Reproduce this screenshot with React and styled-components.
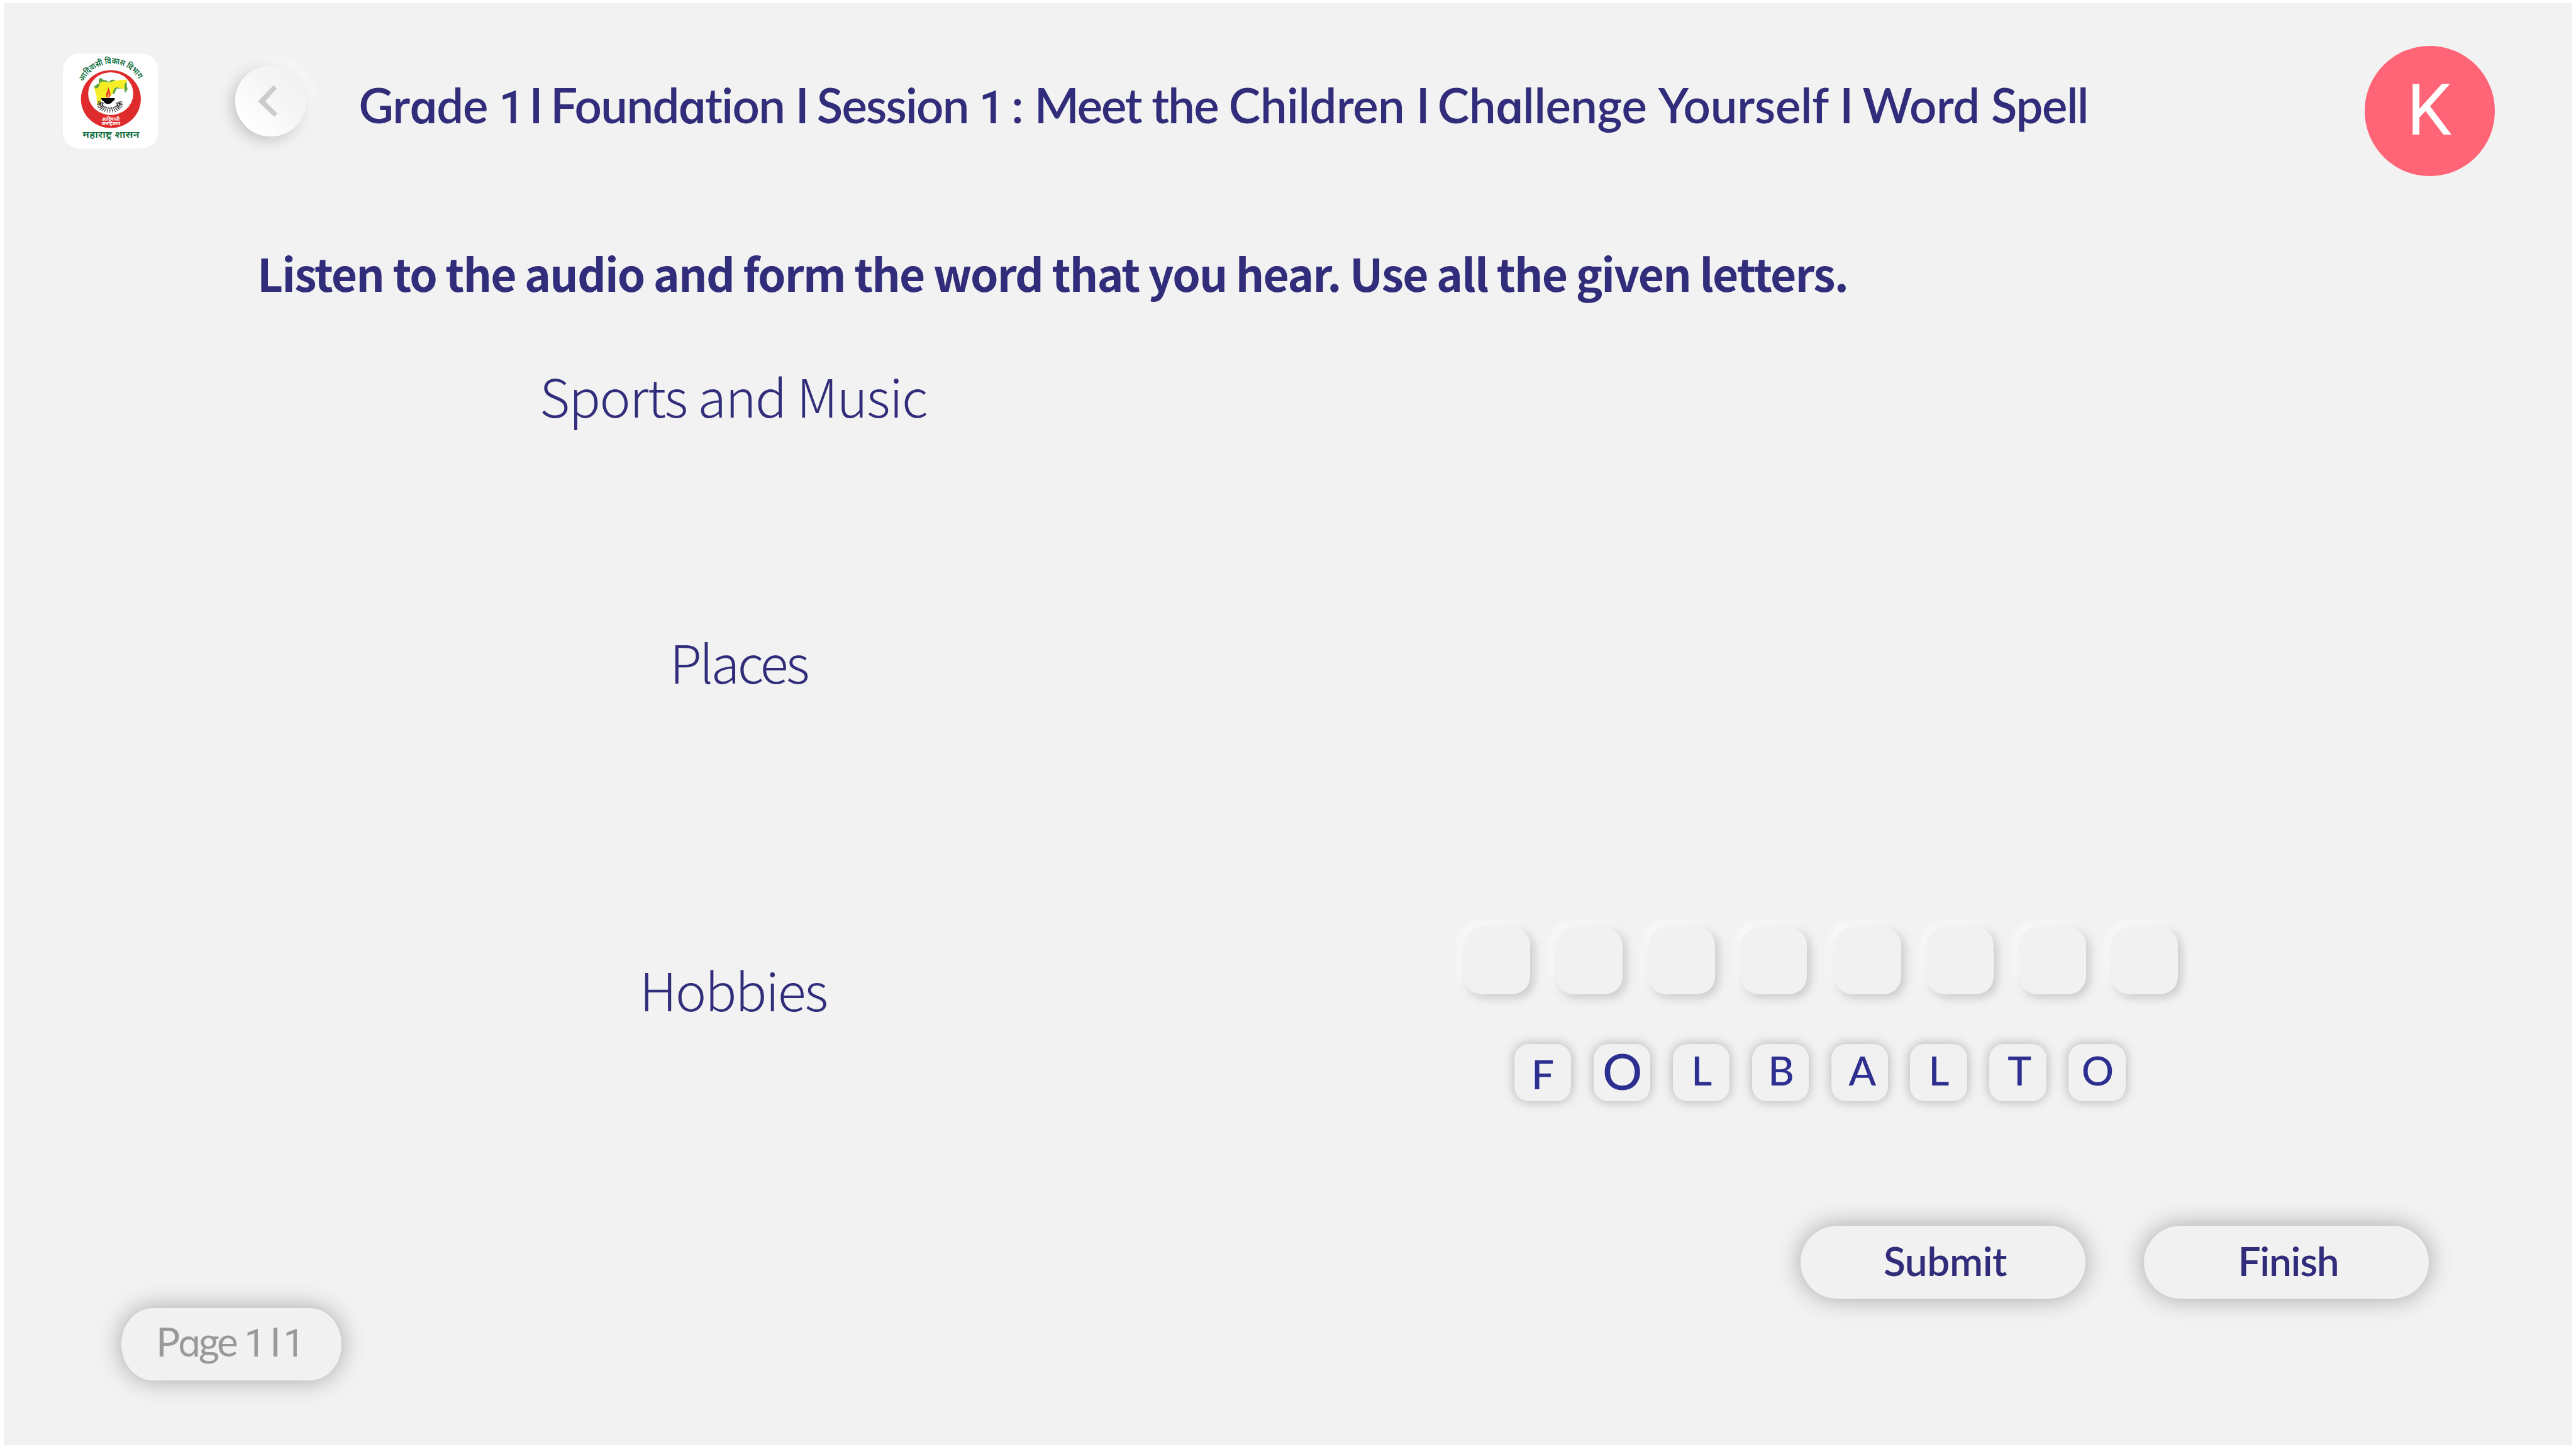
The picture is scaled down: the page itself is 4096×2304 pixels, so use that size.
import React, { useLayoutEffect, useRef, useState } from 'react';
import styled, { createGlobalStyle } from 'styled-components';

const Global = createGlobalStyle`
  html, body { margin: 0; padding: 0; background: #fff; }
  * { box-sizing: border-box; }
`;

const INK = '#312d7a';
const GEO = "Lato, 'Liberation Sans', sans-serif";
const HUMAN = "'Noto Sans CJK SC', 'Open Sans', sans-serif";

const Page = styled.div`
  width: 4096px;
  height: 2304px;
  overflow: hidden;
  display: flex;
  flex-direction: column;
  border: 6px solid #fff;
  border-top-width: 5px;
  background: #f2f2f2;
  color: ${INK};
  font-family: ${GEO};
  font-variant-ligatures: none;
`;

const Header = styled.header`
  display: flex;
  align-items: flex-start;
  height: 378px;
  padding: 68px 123.3px 0 93.5px;
`;

const LogoCard = styled.div`
  width: 151px;
  height: 151px;
  margin-top: 12px;
  border-radius: 26px;
  background: #fff;
  flex: none;
  svg { display: block; width: 100%; height: 100%; }
`;

const BackButton = styled.button`
  width: 113px;
  height: 113px;
  margin: 31px 0 0 123px;
  padding: 0;
  border: 0;
  border-radius: 50%;
  flex: none;
  background: linear-gradient(45deg, #fff 15%, #f5f5f5 60%, #f2f2f2 85%);
  box-shadow: -6px 6px 22px rgba(0, 0, 0, 0.19), 9px -8px 20px rgba(255, 255, 255, 0.75);
  svg { display: block; width: 100%; height: 100%; }
`;

const Title = styled.h1`
  margin: 47.5px 0 0 84px;
  font-size: 76px;
  line-height: 92px;
  font-weight: 600;
  white-space: pre;
`;

const Avatar = styled.div`
  width: 206.5px;
  height: 206.5px;
  margin-left: auto;
  flex: none;
  border-radius: 50%;
  background: #ff6577;
  color: #fff;
  display: flex;
  align-items: center;
  justify-content: center;
  font-family: Roboto, sans-serif;
  font-size: 113px;
  line-height: 200px;
  padding: 0 2px 0 0;
`;

const Prompt = styled.h2`
  margin: 0;
  padding-left: 403px;
  height: 158px;
  font-family: ${HUMAN};
  font-size: 71.2px;
  line-height: 100px;
  font-weight: 700;
  white-space: pre;
`;

const Main = styled.main`
  display: flex;
  height: 1150px;
`;

const Categories = styled.ul`
  list-style: none;
  margin: 0;
  padding: 27px 0 0;
  width: 2321.5px;
  flex: none;
`;

const Category = styled.li`
  height: ${(p) => p.$h}px;
  padding-left: ${(p) => p.$x}px;
  font-family: ${HUMAN};
  font-size: 83px;
  line-height: 120px;
  font-weight: 300;
  white-space: pre;
`;

const Puzzle = styled.section`
  padding-top: 934.3px;
`;

const SlotRow = styled.div`
  display: flex;
  gap: 44px;
`;

const SlotGroup = styled.div`
  display: flex;
  gap: 41.2px;
`;

const Slot = styled.div`
  width: 105.6px;
  height: 105.6px;
  border-radius: 28px;
  background: #f1f1f1;
  box-shadow: 5px 5px 16px rgba(0, 0, 0, 0.19), -5px -5px 16px #fff;
`;

const TileRow = styled.div`
  display: flex;
  gap: 35.5px;
  margin: 79.6px 0 0 80.5px;
`;

const Tile = styled.button`
  display: flex;
  align-items: flex-start;
  width: 90.4px;
  height: 91px;
  padding: ${(p) => p.$top}px 0 0 ${(p) => p.$left}px;
  border: 0;
  border-radius: 23px;
  background: #f1f1f1;
  box-shadow: 0 0 18px rgba(0, 0, 0, 0.28);
  color: #2c2f90;
  font-family: ${GEO};
  font-size: ${(p) => p.$size}px;
  line-height: 64px;
  font-weight: 500;
`;

const Actions = styled.div`
  display: flex;
  gap: 92.5px;
  justify-content: flex-end;
  padding: 258px 228.5px 0 0;
`;

const Pill = styled.button`
  display: flex;
  width: 453px;
  height: 116px;
  padding: 0 0 0 ${(p) => p.$inset}px;
  border: 0;
  border-radius: 58px;
  background: #f1f1f1;
  box-shadow: 0 0 38px rgba(0, 0, 0, 0.32);
  color: ${INK};
  font-family: ${GEO};
  font-size: 64px;
  line-height: 111px;
  font-weight: 600;
  white-space: pre;
`;

const Footer = styled.footer`
  padding: 15px 0 0 187px;
`;

const Pager = styled.div`
  width: 349.5px;
  height: 115px;
  padding-left: 55px;
  border-radius: 50px / 57px;
  background: #f1f1f1;
  box-shadow: 0 0 38px rgba(0, 0, 0, 0.32);
  color: #999;
  font-size: 64px;
  line-height: 105px;
  font-weight: 400;
  white-space: pre;
`;

const One = styled.span`
  font-family: Roboto, sans-serif;
  font-weight: ${(p) => (p.$light ? 400 : 500)};
  font-size: 0.94em;
`;

const RoundA = styled.span`
  font-family: Inter, sans-serif;
  font-feature-settings: 'cv11' 1;
  font-size: 0.92em;
`;

/* Tracks the text so that its advance width equals the given width. */
function Tracked({ children, width, round, light }) {
  const ref = useRef(null);
  const [gap, setGap] = useState(0);
  useLayoutEffect(() => {
    const natural = ref.current.getBoundingClientRect().width;
    setGap((width - natural) / children.length);
  }, []);
  const parts = round ? children.split(/([1a])/) : [children];
  return (
    <span ref={ref} style={{ letterSpacing: `${gap}px` }}>
      {parts.map((p, i) =>
        p === '1' ? <One key={i} $light={light}>1</One> : p === 'a' ? <RoundA key={i}>a</RoundA> : p
      )}
    </span>
  );
}

const titleWords = [
  ['Grade ', 223], ['1 ', 48], ['I ', 33.8], ['Foundation ', 389.5], ['I ', 34], ['Session ', 258],
  ['1 ', 51.5], [': ', 36.5], ['Meet ', 186.5], ['the ', 122.5], ['Children ', 298], ['I ', 34],
  ['Challenge ', 348], ['Yourself ', 288.5], ['I ', 35.5], ['Word ', 204.5], ['Spell', 154],
];

const pagerWords = [['Page ', 140.4], ['1 ', 40.6], ['I ', 21.4], ['1', 35]];

const letters = [
  ['F', 27, 15.7, 64], ['O', 14, 10.4, 79], ['L', 29.5, 9.2, 64], ['B', 25.5, 9.2, 64],
  ['A', 28, 9.2, 64], ['L', 29, 9.2, 64], ['T', 29, 9.2, 64], ['O', 20.5, 9.2, 64],
];

/* Directions of the dancers gathered round the lamp. */
const people = Array.from({ length: 19 }, (_, i) => (205 - (i * 230) / 18) * (Math.PI / 180));

function Logo() {
  return (
    <svg viewBox="80 58 848 850">
      <defs>
        <path id="arc" d="M262 312 A283 290 0 0 1 772 318" />
      </defs>
      <g fill="#0b6b3a" fontFamily="'Noto Sans Devanagari', 'Noto Sans', sans-serif" fontWeight="600">
        <text fontSize="76"><textPath href="#arc" textLength="606" lengthAdjust="spacingAndGlyphs">आदिवासी विकास विभाग</textPath></text>
        <text x="255" y="810" fontSize="80" textLength="508" lengthAdjust="spacingAndGlyphs">महाराष्ट्र शासन</text>
      </g>
      <ellipse cx="508.500" cy="466.500" rx="268" ry="259" fill="#df2b2b" />
      <ellipse cx="507" cy="418" rx="202" ry="191" fill="#fff" />
      <path fill="#5fa347" d="M357 352L372 346 385 332 400 330 400 292 405 282 425 278 430 290 470 300 490 315 508 296 538 292 545 300 654 300 650 335 656 372 666 376 650 386 644 406 632 404 630 372 560 372 552 395 540 420 522 415 520 400 430 470Z" />
      <path fill="#f5ee27" d="M357 360L375 372 392 366 404 345 412 316 445 308 490 318 540 303 600 295 652 292 652 312 632 328 630 374 600 372 565 360 540 370 530 395 520 425 490 450 425 470 400 525 385 510 380 440 368 400Z" />
      <path fill="#fff" d="M566 374L628 378 632 410 600 450 530 440 508 448 538 422 552 392Z" />
      <g stroke="#111" strokeWidth="7" strokeDasharray="13 4 20 3 12" strokeLinecap="butt">
        {people.map((a, i) => (
          <line key={i}
            x1={500 + 62 * Math.cos(a)} y1={515 + 26 * Math.sin(a)}
            x2={500 + 118 * Math.cos(a)} y2={515 + 71 * Math.sin(a)} />
        ))}
      </g>
      <path fill="#e3262b" d="M487 356C490 385 506 405 504 430C503 445 498 455 487 455C474 455 465 445 466 428C468 402 485 390 487 356Z" />
      <path fill="#f7a83a" d="M486 398C488 415 497 425 495 440C493 450 490 455 486 455C478 455 474 446 476 436C477 424 486 415 486 398Z" />
      <path fill="#050505" d="M421 457H545Q541 480 524 487Q512 510 483 510Q456 510 444 487Q426 480 421 457Z" />
      <g fill="#fff" fontFamily="'Noto Sans Devanagari', 'Noto Sans', sans-serif" fontWeight="700" fontSize="42">
        <text x="427" y="660" textLength="160" lengthAdjust="spacingAndGlyphs">आदिवासी</text>
        <text x="427" y="702" textLength="165" lengthAdjust="spacingAndGlyphs">जनहिताय</text>
      </g>
    </svg>
  );
}

export default function App() {
  return (
    <Page>
      <Global />
      <Header>
        <LogoCard><Logo /></LogoCard>
        <BackButton aria-label="Back">
          <svg viewBox="181 165 634 636">
            <path d="M523 351L393 487L529 617L550 595L441 487L544 371Z" fill="#ccc" stroke="#ccc" strokeWidth="12" strokeLinejoin="round" />
          </svg>
        </BackButton>
        <Title>
          {titleWords.map(([word, width], i) => <Tracked key={i} width={width} round>{word}</Tracked>)}
        </Title>
        <Avatar>K</Avatar>
      </Header>
      <Prompt>
        <Tracked width={2529}>Listen to the audio and form the word that you hear. Use all the given letters.</Tracked>
      </Prompt>
      <Main>
        <Categories>
          <Category $x={852} $h={423}><Tracked width={616}>Sports and Music</Tracked></Category>
          <Category $x={1059} $h={521}><Tracked width={219}>Places</Tracked></Category>
          <Category $x={1011} $h={140}><Tracked width={298}>Hobbies</Tracked></Category>
        </Categories>
        <Puzzle>
          <SlotRow>
            {[0, 1].map((g) => (
              <SlotGroup key={g}>{[0, 1, 2, 3].map((n) => <Slot key={n} />)}</SlotGroup>
            ))}
          </SlotRow>
          <TileRow>
            {letters.map(([letter, left, top, size], i) => (
              <Tile key={i} $left={left} $top={top} $size={size}>{letter}</Tile>
            ))}
          </TileRow>
        </Puzzle>
      </Main>
      <Actions>
        <Pill $inset={132}><Tracked width={196}>Submit</Tracked></Pill>
        <Pill $inset={150}><Tracked width={160}>Finish</Tracked></Pill>
      </Actions>
      <Footer>
        <Pager>
          {pagerWords.map(([word, width], i) => <Tracked key={i} width={width} round light>{word}</Tracked>)}
        </Pager>
      </Footer>
    </Page>
  );
}
